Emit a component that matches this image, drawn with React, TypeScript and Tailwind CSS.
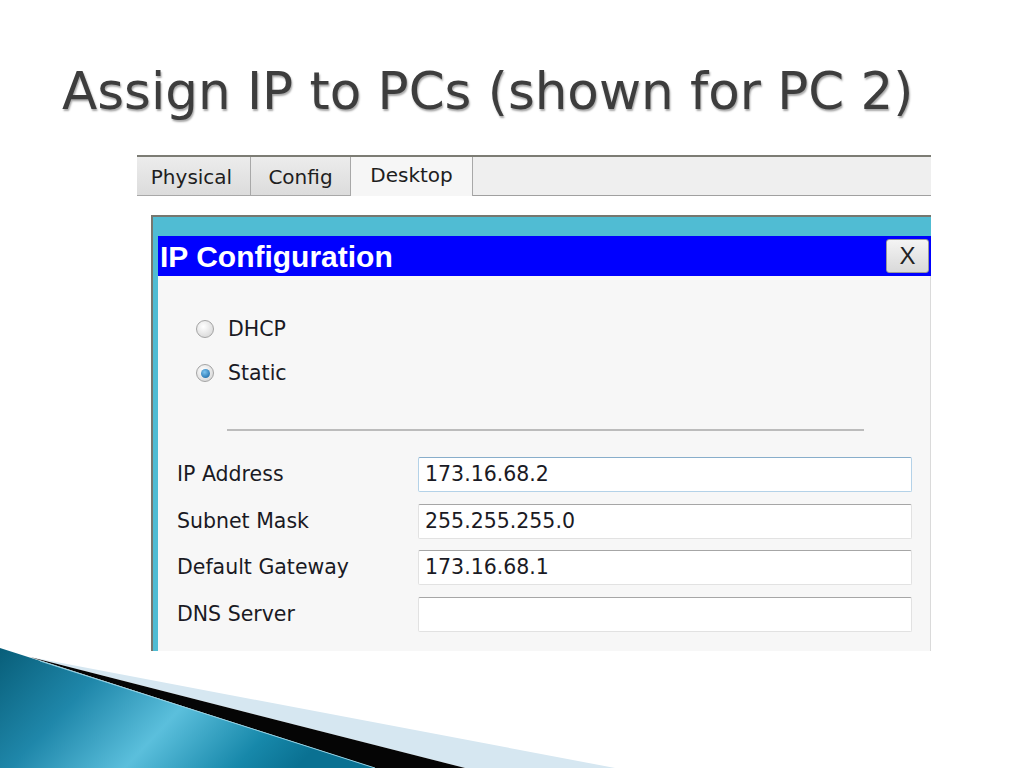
const rows = [
  { label: 'IP Address', value: '173.16.68.2', focused: true },
  { label: 'Subnet Mask', value: '255.255.255.0' },
  { label: 'Default Gateway', value: '173.16.68.1' },
  { label: 'DNS Server', value: '' },
]

function Radio({ checked }: { checked?: boolean }) {
  return (
    <span className="flex h-[18px] w-[18px] items-center justify-center rounded-full border border-[#a4a4a4] bg-[radial-gradient(circle_at_40%_35%,#ffffff,#d0d0d0)]">
      {checked && (
        <span className="h-[9px] w-[9px] rounded-full bg-[radial-gradient(circle_at_40%_35%,#7cc4f0,#0d5c9c)]" />
      )}
    </span>
  )
}

function Swoosh() {
  return (
    <svg
      className="absolute bottom-0 left-0"
      width="1024"
      height="130"
      viewBox="0 638 1024 130"
    >
      <defs>
        <linearGradient id="teal" x1="0" y1="0" x2="1" y2="0.3">
          <stop offset="0" stopColor="#085e79" />
          <stop offset="0.3" stopColor="#1f87aa" />
          <stop offset="0.58" stopColor="#5bbfdc" />
          <stop offset="0.85" stopColor="#1788aa" />
          <stop offset="1" stopColor="#0a7192" />
        </linearGradient>
      </defs>
      <polygon points="30,657 615,768 465,768" fill="#d6e7f1" />
      <polygon points="0,648 375,768 0,768" fill="url(#teal)" />
      <polygon points="30,657 465,768 375,768" fill="#050505" />
      <line x1="40" y1="661" x2="375" y2="768" stroke="#8fd0e4" strokeWidth="1" />
    </svg>
  )
}

export default function App() {
  return (
    <div className="relative h-[768px] w-[1024px] overflow-hidden bg-white font-['DejaVu_Sans',sans-serif]">
      <div className="h-[155px] pl-[62px] pt-[66px]">
        <h1 className="text-[51.5px] leading-none text-[#3d3d3d] [text-shadow:1px_2px_2px_rgba(0,0,0,0.35)]">
          Assign IP to PCs (shown for PC 2)
        </h1>
      </div>

      <div className="ml-[137px] flex h-[496px] w-[794px] flex-col overflow-hidden">
        {/* tab strip */}
        <div className="flex h-[41px] border-t-2 border-[#7c7c74] bg-[#efefef] text-[20px] text-[#1e1e1e]">
          <div className="flex w-[114px] items-center justify-center border-r border-b border-[#a8a8a8] bg-gradient-to-b from-[#ececec] to-[#dcdcdc] pr-[4px] pt-[2px]">
            Physical
          </div>
          <div className="flex w-[100px] items-center justify-center border-r border-b border-[#a8a8a8] bg-gradient-to-b from-[#ececec] to-[#dcdcdc] pt-[2px]">
            Config
          </div>
          <div className="flex w-[122px] items-center justify-center border-r border-[#a8a8a8] bg-[#f6f6f6] pb-[3px]">
            Desktop
          </div>
          <div className="flex-1 border-b border-[#a0a0a0]" />
        </div>

        {/* window */}
        <div className="ml-[14px] mt-[19px] flex flex-1 flex-col border-t-2 border-l-2 border-[#76776f] bg-[#50bcd3] pl-[5px] pt-[19px]">
          <div className="flex h-[40px] items-center justify-between bg-[#0000ff] pl-[2px] pr-[2px]">
            <span className="font-['Liberation_Sans',sans-serif] text-[30px] font-bold text-white">
              IP Configuration
            </span>
            <button className="flex h-[34px] w-[43px] items-center justify-center rounded-[3px] border border-[#9a9a9a] bg-gradient-to-b from-[#f4f4f4] to-[#d9d9d9] font-['Liberation_Sans',sans-serif] text-[24px] leading-none text-[#222]">
              X
            </button>
          </div>

          <div className="flex-1 border-r border-[#dadada] bg-[#f7f7f7] text-[20.5px] text-[#1a1a24]">
            <div className="flex flex-col gap-[14px] pl-[38px] pt-[38px]">
              <label className="flex h-[30px] items-center gap-[14px]">
                <Radio />
                <span>DHCP</span>
              </label>
              <label className="flex h-[30px] items-center gap-[14px]">
                <Radio checked />
                <span>Static</span>
              </label>
            </div>

            <div className="ml-[69px] mt-[41px] h-[2px] w-[637px] bg-[#bcbcbc]" />

            <div className="mt-[26px] flex flex-col gap-[11.5px] pl-[19px]">
              {rows.map((r) => (
                <div key={r.label} className="flex h-[35px] items-center">
                  <span className="w-[241px]">{r.label}</span>
                  <div
                    className={
                      r.focused
                        ? 'flex h-full w-[494px] items-center rounded-[2px] border border-[#b4d2e8] border-t-[#88aecb] bg-white pl-[6px]'
                        : 'flex h-full w-[494px] items-center rounded-[2px] border border-[#e2e2e2] border-t-[#a6a6a6] bg-white pl-[6px]'
                    }
                  >
                    {r.value}
                  </div>
                </div>
              ))}
            </div>
          </div>
        </div>
      </div>

      <Swoosh />
    </div>
  )
}
